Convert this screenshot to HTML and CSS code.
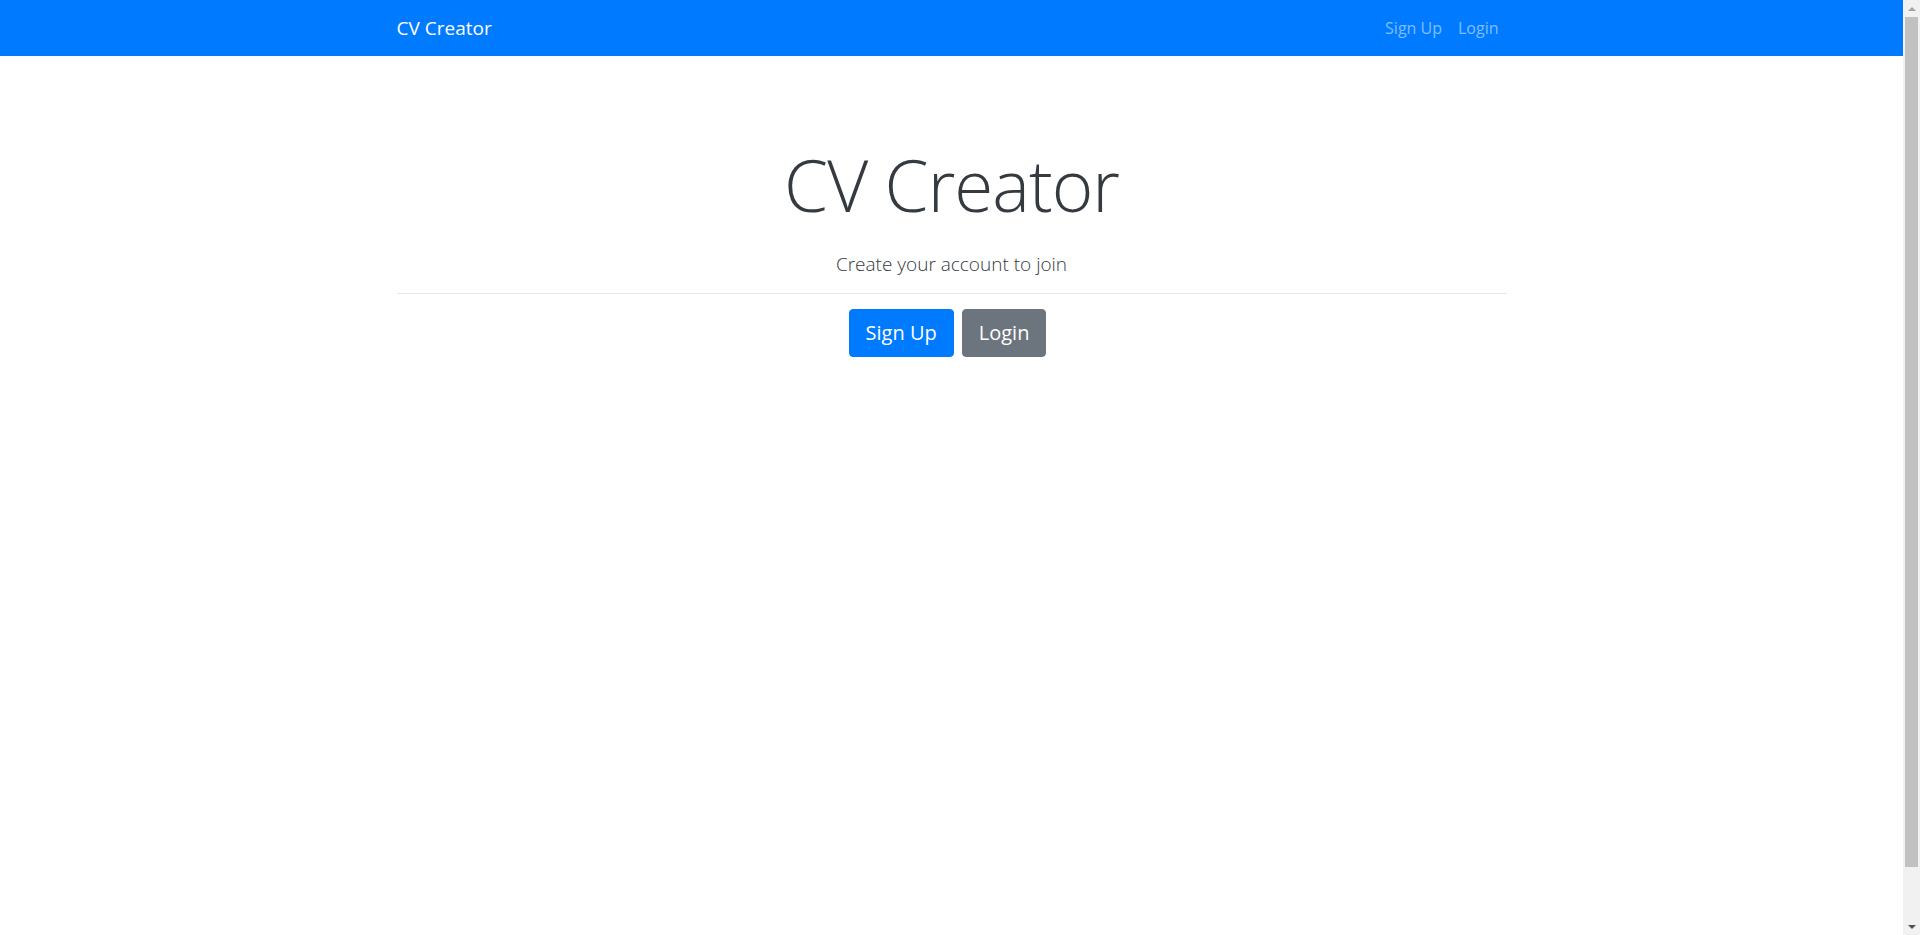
FILE: index.html
```html
<!DOCTYPE html>
<html lang="en">
<head>
<meta charset="utf-8">
<title>CV Creator</title>
<link rel="stylesheet" href="styles.css">
</head>
<body>
<nav class="navbar">
  <div class="container nav-inner">
    <a class="brand" href="#">CV Creator</a>
    <ul class="nav-links">
      <li><a class="nav-link" href="#">Sign Up</a></li>
      <li><a class="nav-link" href="#">Login</a></li>
    </ul>
  </div>
</nav>
<main class="container hero">
  <h1 class="display">CV Creator</h1>
  <p class="lead">Create your account to join</p>
  <hr class="divider">
  <div class="actions">
    <a class="btn btn-primary" href="#">Sign Up</a>
    <a class="btn btn-secondary" href="#">Login</a>
  </div>
</main>
<div class="scrollbar" aria-hidden="true">
  <div class="sb-btn"><span class="arrow-up"></span></div>
  <div class="sb-track"><div class="sb-thumb"></div></div>
  <div class="sb-btn"><span class="arrow-down"></span></div>
</div>
</body>
</html>
```

FILE: styles.css
```css
* {
  box-sizing: border-box;
}
body {
  margin: 0 17px 0 0;
  font-family: "Open Sans", "Noto Sans", sans-serif;
  font-size: 16px;
  line-height: 1.5;
  color: #212529;
  background: #fff;
}
.container {
  max-width: 1140px;
  margin: 0 auto;
  padding: 0 15px;
}
.navbar {
  background: #007bff;
  height: 56px;
}
.nav-inner {
  display: flex;
  align-items: center;
  justify-content: space-between;
  height: 56px;
}
.brand {
  color: #fff;
  text-decoration: none;
  font-size: 19px;
  line-height: 30px;
}
.nav-links {
  list-style: none;
  display: flex;
  margin: 0;
  padding: 0;
}
.nav-link {
  display: block;
  padding: 8px 8px;
  color: rgba(255, 255, 255, 0.5);
  text-decoration: none;
  font-size: 16px;
}
.hero {
  text-align: center;
}
.display {
  font-weight: 300;
  font-size: 71px;
  line-height: 1.2;
  margin: 86px 0 0;
  color: #343a40;
  letter-spacing: -1px;
}
.lead {
  font-size: 19px;
  font-weight: 300;
  margin: 23px 0 0;
  color: #343a40;
}
.divider {
  border: 0;
  border-top: 1px solid rgba(0, 0, 0, 0.1);
  margin: 14px 0 15px;
}
.actions {
  display: flex;
  justify-content: center;
  gap: 8px;
  padding-right: 8px;
}
.btn {
  display: inline-block;
  font-size: 20px;
  line-height: 30px;
  padding: 8px 16px;
  border: 1px solid transparent;
  border-radius: 4px;
  color: #fff;
  text-decoration: none;
}
.btn-primary {
  background: #007bff;
  border-color: #007bff;
}
.btn-secondary {
  background: #6c757d;
  border-color: #6c757d;
}
.scrollbar {
  position: fixed;
  top: 0;
  right: 0;
  width: 17px;
  height: 100%;
  background: #f1f1f1;
  display: flex;
  flex-direction: column;
}
.sb-btn {
  height: 17px;
  display: flex;
  align-items: center;
  justify-content: center;
}
.sb-track {
  flex: 1;
  padding: 0 2px;
}
.sb-thumb {
  height: 850px;
  background: #c1c1c1;
}
.arrow-up {
  width: 0;
  height: 0;
  border-left: 4px solid transparent;
  border-right: 4px solid transparent;
  border-bottom: 4px solid #a3a3a3;
}
.arrow-down {
  width: 0;
  height: 0;
  border-left: 4px solid transparent;
  border-right: 4px solid transparent;
  border-top: 4px solid #505050;
}
```
